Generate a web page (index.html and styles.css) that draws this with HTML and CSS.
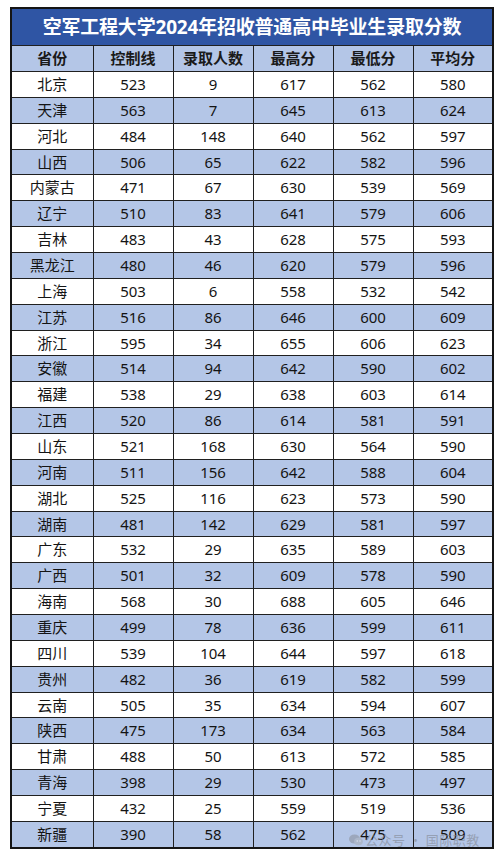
FILE: index.html
```html
<!DOCTYPE html>
<html lang="zh">
<head>
<meta charset="utf-8">
<link rel="stylesheet" href="styles.css">
</head>
<body>
<div class="wrap">
<table class="score">
<colgroup>
<col class="c1"><col class="c2"><col class="c3"><col class="c4"><col class="c5"><col class="c6">
</colgroup>
<thead>
<tr class="title"><th colspan="6">空军工程大学2024年招收普通高中毕业生录取分数</th></tr>
<tr class="head"><th>省份</th><th>控制线</th><th>录取人数</th><th>最高分</th><th>最低分</th><th>平均分</th></tr>
</thead>
<tbody>
<tr><td>北京</td><td>523</td><td>9</td><td>617</td><td>562</td><td>580</td></tr>
<tr><td>天津</td><td>563</td><td>7</td><td>645</td><td>613</td><td>624</td></tr>
<tr><td>河北</td><td>484</td><td>148</td><td>640</td><td>562</td><td>597</td></tr>
<tr><td>山西</td><td>506</td><td>65</td><td>622</td><td>582</td><td>596</td></tr>
<tr><td>内蒙古</td><td>471</td><td>67</td><td>630</td><td>539</td><td>569</td></tr>
<tr><td>辽宁</td><td>510</td><td>83</td><td>641</td><td>579</td><td>606</td></tr>
<tr><td>吉林</td><td>483</td><td>43</td><td>628</td><td>575</td><td>593</td></tr>
<tr><td>黑龙江</td><td>480</td><td>46</td><td>620</td><td>579</td><td>596</td></tr>
<tr><td>上海</td><td>503</td><td>6</td><td>558</td><td>532</td><td>542</td></tr>
<tr><td>江苏</td><td>516</td><td>86</td><td>646</td><td>600</td><td>609</td></tr>
<tr><td>浙江</td><td>595</td><td>34</td><td>655</td><td>606</td><td>623</td></tr>
<tr><td>安徽</td><td>514</td><td>94</td><td>642</td><td>590</td><td>602</td></tr>
<tr><td>福建</td><td>538</td><td>29</td><td>638</td><td>603</td><td>614</td></tr>
<tr><td>江西</td><td>520</td><td>86</td><td>614</td><td>581</td><td>591</td></tr>
<tr><td>山东</td><td>521</td><td>168</td><td>630</td><td>564</td><td>590</td></tr>
<tr><td>河南</td><td>511</td><td>156</td><td>642</td><td>588</td><td>604</td></tr>
<tr><td>湖北</td><td>525</td><td>116</td><td>623</td><td>573</td><td>590</td></tr>
<tr><td>湖南</td><td>481</td><td>142</td><td>629</td><td>581</td><td>597</td></tr>
<tr><td>广东</td><td>532</td><td>29</td><td>635</td><td>589</td><td>603</td></tr>
<tr><td>广西</td><td>501</td><td>32</td><td>609</td><td>578</td><td>590</td></tr>
<tr><td>海南</td><td>568</td><td>30</td><td>688</td><td>605</td><td>646</td></tr>
<tr><td>重庆</td><td>499</td><td>78</td><td>636</td><td>599</td><td>611</td></tr>
<tr><td>四川</td><td>539</td><td>104</td><td>644</td><td>597</td><td>618</td></tr>
<tr><td>贵州</td><td>482</td><td>36</td><td>619</td><td>582</td><td>599</td></tr>
<tr><td>云南</td><td>505</td><td>35</td><td>634</td><td>594</td><td>607</td></tr>
<tr><td>陕西</td><td>475</td><td>173</td><td>634</td><td>563</td><td>584</td></tr>
<tr><td>甘肃</td><td>488</td><td>50</td><td>613</td><td>572</td><td>585</td></tr>
<tr><td>青海</td><td>398</td><td>29</td><td>530</td><td>473</td><td>497</td></tr>
<tr><td>宁夏</td><td>432</td><td>25</td><td>559</td><td>519</td><td>536</td></tr>
<tr><td>新疆</td><td>390</td><td>58</td><td>562</td><td>475</td><td>509</td></tr>
</tbody>
</table>
<div class="watermark">
<svg class="wm-icon" width="14" height="12" viewBox="0 0 14 12"><ellipse cx="5.5" cy="5" rx="5.5" ry="4.6" fill="#8a8f99"/><ellipse cx="9.5" cy="7.5" rx="4.4" ry="3.7" fill="#a6abb4"/><circle cx="8.2" cy="7" r="0.7" fill="#fff"/><circle cx="11" cy="7" r="0.7" fill="#fff"/></svg>
<span class="wm-text">公众号 · 国际职教</span>
</div>
</div>
</body>
</html>
```
FILE: styles.css
```css
html, body {
  margin: 0;
  padding: 0;
  background: #ffffff;
}
body {
  font-family: "Noto Sans", "Noto Sans CJK SC", sans-serif;
  color: #141414;
}
.wrap {
  position: relative;
  padding: 7px 8px 0 10px;
}
.score {
  border-collapse: collapse;
  table-layout: fixed;
  width: 482px;
  border: 2px solid #151515;
}
.c1 { width: 82px; }
.c2, .c3, .c4, .c5 { width: 80px; }
.c6 { width: 80px; }
.score th, .score td {
  border: 1px solid #202020;
  padding: 0;
  text-align: center;
  vertical-align: middle;
  line-height: 1;
}
.title th {
  height: 36px;
  background: #2f55a4;
  color: #ffffff;
  font-size: 19px;
  font-weight: 700;
  letter-spacing: -0.2px;
}
.head th {
  height: 25px;
  background: #b4c6e7;
  font-size: 15px;
  font-weight: 700;
  color: #1a1a1a;
}
.score td {
  height: 24.87px;
  font-size: 15px;
  background: #ffffff;
}
.score tbody tr:nth-child(even) td {
  background: #b4c6e7;
}
.watermark {
  position: absolute;
  left: 349px;
  top: 830px;
  display: flex;
  align-items: center;
  gap: 2px;
  opacity: 0.55;
}
.wm-text {
  font-family: "Noto Sans CJK SC", sans-serif;
  font-size: 13px;
  color: #7d828c;
  letter-spacing: 0.5px;
}
```
